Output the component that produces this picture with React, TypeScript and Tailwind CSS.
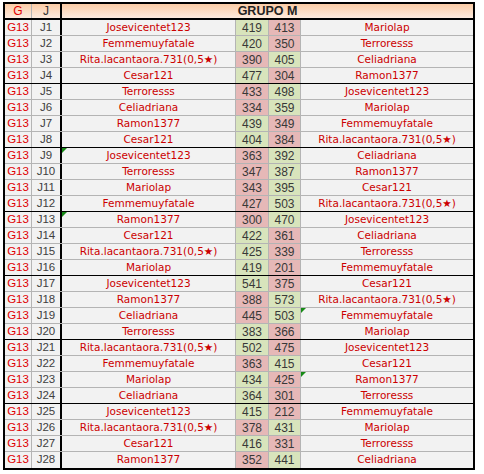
import React from "react";

type Row = [string, number, number, string, ("L" | "R" | null)?];

const rows: Row[] = [
  ["Josevicentet123", 419, 413, "Mariolap"],
  ["Femmemuyfatale", 420, 350, "Terroresss"],
  ["Rita.lacantaora.731(0,5★)", 390, 405, "Celiadriana"],
  ["Cesar121", 477, 304, "Ramon1377"],
  ["Terroresss", 433, 498, "Josevicentet123"],
  ["Celiadriana", 334, 359, "Mariolap"],
  ["Ramon1377", 439, 349, "Femmemuyfatale"],
  ["Cesar121", 404, 384, "Rita.lacantaora.731(0,5★)"],
  ["Josevicentet123", 363, 392, "Celiadriana", "L"],
  ["Terroresss", 347, 387, "Ramon1377"],
  ["Mariolap", 343, 395, "Cesar121"],
  ["Femmemuyfatale", 427, 503, "Rita.lacantaora.731(0,5★)"],
  ["Ramon1377", 300, 470, "Josevicentet123", "L"],
  ["Cesar121", 422, 361, "Celiadriana"],
  ["Rita.lacantaora.731(0,5★)", 425, 339, "Terroresss"],
  ["Mariolap", 419, 201, "Femmemuyfatale"],
  ["Josevicentet123", 541, 375, "Cesar121"],
  ["Ramon1377", 388, 573, "Rita.lacantaora.731(0,5★)"],
  ["Celiadriana", 445, 503, "Femmemuyfatale", "R"],
  ["Terroresss", 383, 366, "Mariolap"],
  ["Rita.lacantaora.731(0,5★)", 502, 475, "Josevicentet123"],
  ["Femmemuyfatale", 363, 415, "Cesar121"],
  ["Mariolap", 434, 425, "Ramon1377", "R"],
  ["Celiadriana", 364, 301, "Terroresss"],
  ["Josevicentet123", 415, 212, "Femmemuyfatale"],
  ["Rita.lacantaora.731(0,5★)", 378, 431, "Mariolap"],
  ["Cesar121", 416, 331, "Terroresss"],
  ["Ramon1377", 352, 441, "Celiadriana"],
];

function Tri() {
  return (
    <span className="absolute left-0 top-0 h-0 w-0 border-t-[5px] border-r-[5px] border-t-[#168a16] border-r-transparent" />
  );
}

export default function App() {
  return (
    <div className="bg-white w-[484px] h-[474px] pt-[2px] pl-[3px]">
      <div className="w-[472px] border-2 border-black bg-[#f2f2f2]">
        <div className="flex h-[16px] border-b-2 border-black bg-gradient-to-b from-[#fbcca6] to-[#fdebdf] font-['Liberation_Sans',sans-serif] text-[12px]">
          <div className="w-[27px] border-r border-[#b4b4b4] flex items-center justify-center text-[#e00000]">G</div>
          <div className="w-[30px] border-r-2 border-black flex items-center justify-center text-[#333333]">J</div>
          <div className="flex-1 flex items-center justify-center font-bold text-[12.5px] text-[#222222]">GRUPO M</div>
        </div>
        {rows.map((r, i) => {
          const [a, s1, s2, b, tri] = r;
          const last = i === rows.length - 1;
          const groupEnd = (i + 1) % 4 === 0;
          const borderCls = last ? "" : groupEnd ? "border-b border-black" : "border-b border-[#b4b4b4]";
          const g1 = s1 > s2;
          return (
            <div key={i} className={`flex h-[16px] ${borderCls}`}>
              <div className="w-[27px] border-r border-[#b4b4b4] flex items-center justify-center font-['Liberation_Sans',sans-serif] text-[11.5px] text-[#e00000]">G13</div>
              <div className="w-[30px] border-r-2 border-black flex items-center justify-center font-['Liberation_Sans',sans-serif] text-[11.5px] text-[#404040]">J{i + 1}</div>
              <div className="relative w-[174px] border-r border-[#b4b4b4] flex items-center justify-center font-['DejaVu_Sans',sans-serif] text-[10.5px] text-[#cc0000] whitespace-nowrap">
                {tri === "L" && <Tri />}
                {a}
              </div>
              <div className={`w-[33px] border-r border-[#b4b4b4] flex items-center justify-center font-['Liberation_Sans',sans-serif] text-[12px] text-[#383838] ${g1 ? "bg-[#d8e4bc]" : "bg-[#e6b8b7]"}`}>{s1}</div>
              <div className={`w-[32px] border-r border-[#b4b4b4] flex items-center justify-center font-['Liberation_Sans',sans-serif] text-[12px] text-[#383838] ${g1 ? "bg-[#e6b8b7]" : "bg-[#d8e4bc]"}`}>{s2}</div>
              <div className="relative flex-1 flex items-center justify-center font-['DejaVu_Sans',sans-serif] text-[10.5px] text-[#cc0000] whitespace-nowrap">
                {tri === "R" && <Tri />}
                {b}
              </div>
            </div>
          );
        })}
      </div>
    </div>
  );
}
